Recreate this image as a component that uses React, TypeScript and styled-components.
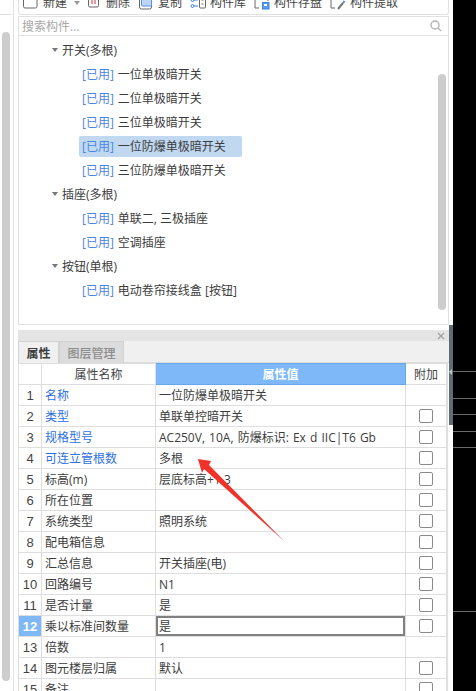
import React from 'react'
import styled, {createGlobalStyle} from 'styled-components'

const Global = createGlobalStyle`
  html, body {
    margin: 0;
    padding: 0;
    background: #fff;
  }
  * {
    box-sizing: border-box;
  }
`

const Page = styled.div`
  position: relative;
  display: flex;
  width: 476px;
  height: 691px;
  overflow: hidden;
  background: #fff;
  font-family: "Open Sans", "Noto Sans CJK SC", sans-serif;
  font-size: 12px;
  color: #3c3c3c;
`

const LeftRail = styled.div`
  width: 18px;
  flex: none;
`

const LeftInner = styled.div`
  width: 14px;
  height: 100%;
  border-right: 1px solid #e2e2e2;
`

const LeftStub = styled.div`
  height: 15px;
  border-bottom: 1px solid #e2e2e2;
  border-bottom-right-radius: 3px;
`

const LeftThumb = styled.div`
  width: 8px;
  height: 649px;
  margin: 17px 0 0 2px;
  border-radius: 4px;
  background: #cdcdcd;
`

const Main = styled.div`
  width: 431px;
  flex: none;
  display: flex;
  flex-direction: column;

  > * {
    flex: none;
  }
`

const Toolbar = styled.div`
  height: 15px;
  display: flex;
  align-items: flex-end;
  overflow: hidden;
  padding: 0 0 2px 4px;
  border: 1px solid #e2e2e2;
  border-top: none;
  border-radius: 0 0 3px 3px;
`

const ToolButton = styled.div<{$w: number}>`
  width: ${p => p.$w}px;
  flex: none;
  display: flex;
  align-items: center;
  gap: 4px;
  line-height: 18px;
  white-space: nowrap;
  color: #444;
`

const Caret = styled.span`
  width: 0;
  height: 0;
  margin-left: 3px;
  border-left: 3px solid transparent;
  border-right: 3px solid transparent;
  border-top: 4px solid #999;
`

const SearchBox = styled.div`
  height: 20px;
  margin-top: 1px;
  display: flex;
  align-items: center;
  justify-content: space-between;
  padding: 0 6px 0 3px;
  border: 1px solid #e2e2e2;
  color: #a8a8a8;
`

const TreePanel = styled.div`
  position: relative;
  height: 289px;
  padding-top: 2px;
  border: 1px solid #e2e2e2;
  border-top: none;
`

const GroupRow = styled.div`
  height: 24px;
  display: flex;
  align-items: center;
  padding: 0 0 1px 33px;
  gap: 4px;
`

const GroupArrow = styled.span`
  width: 0;
  height: 0;
  border-left: 3.5px solid transparent;
  border-right: 3.5px solid transparent;
  border-top: 4px solid #777;
`

const ItemRow = styled.div`
  height: 24px;
  display: flex;
  align-items: center;
  padding-left: 60px;
`

const ItemLabel = styled.div<{$selected?: boolean}>`
  height: 21px;
  padding: 0 16px 0 3px;
  display: flex;
  align-items: center;
  gap: 4px;
  border-radius: 2px;
  background: ${p => (p.$selected ? '#c1d8f1' : 'transparent')};
`

const UsedTag = styled.span`
  color: #4a86e0;
`

const TreeThumb = styled.div`
  position: absolute;
  top: 38px;
  right: 2px;
  width: 8px;
  height: 236px;
  border-radius: 4px;
  background: #cdcdcd;
`

const PropsHeader = styled.div`
  height: 11px;
  margin-top: 5px;
  padding-right: 4px;
  display: flex;
  align-items: center;
  justify-content: flex-end;
  background: #e4e4e4;
`

const TabBar = styled.div`
  height: 22px;
  display: flex;
  background: #f0f0f0;
  border-bottom: 1px solid #dcdcdc;
`

const Tab = styled.div<{$active?: boolean}>`
  height: 22px;
  padding: 0 7.5px;
  display: flex;
  align-items: center;
  border: 1px solid #d2d2d2;
  border-bottom: none;
  font-weight: ${p => (p.$active ? 700 : 500)};
  color: ${p => (p.$active ? '#3c3c3c' : '#8c8c8c')};
  background: ${p => (p.$active ? '#f0f0f0' : '#dcdcdc')};
`

const TableArea = styled.div`
  width: 430px;
  height: 400px;
  border-right: 1px solid #e0e0e0;
`

const Table = styled.table`
  width: 428px;
  table-layout: fixed;
  border-collapse: collapse;
  font-size: 12px;
`

const Th = styled.th<{$value?: boolean}>`
  height: 21px;
  padding: 0;
  font-weight: ${p => (p.$value ? 700 : 400)};
  border: 1px solid ${p => (p.$value ? '#69a7ec' : '#dedede')};
  color: ${p => (p.$value ? '#fff' : '#444')};
  background: ${p => (p.$value ? '#7eb8f8' : '#fff')};
`

const Td = styled.td`
  height: 21px;
  padding: 1px 3px 0;
  border: 1px solid #dedede;
  line-height: 18px;
  white-space: nowrap;
  overflow: hidden;
`

const NumCell = styled(Td)<{$active?: boolean}>`
  padding: 1px 0 0;
  text-align: center;
  font-family: "Liberation Sans", sans-serif;
  font-size: 13px;
  font-weight: ${p => (p.$active ? 700 : 400)};
  color: ${p => (p.$active ? '#fff' : '#444')};
  background: ${p => (p.$active ? '#7eb8f8' : '#fff')};
`

const NameCell = styled(Td)<{$link?: boolean}>`
  color: ${p => (p.$link ? '#2f6fe4' : '#3c3c3c')};
`

const ValueCell = styled(Td)<{$editing?: boolean}>`
  word-spacing: 1px;
  box-shadow: ${p => (p.$editing ? 'inset 0 0 0 2px #808080' : 'none')};
`

const CheckCell = styled(Td)`
  padding: 0;
`

const Check = styled.div`
  width: 14px;
  height: 14px;
  margin: 0 auto;
  border: 1px solid #8a8a8a;
  border-radius: 2px;
  background: #fff;
`

const RightEdge = styled.div`
  width: 4px;
  flex: none;
  padding-top: 325px;
  background: #fff;
`

const EdgeBar = styled.div`
  position: relative;
  width: 4px;
  height: 100px;
  background: #5f6b75;

  &::after {
    content: "";
    position: absolute;
    top: 44px;
    left: 0;
    border-top: 3px solid transparent;
    border-bottom: 3px solid transparent;
    border-right: 3px solid #c4c9cd;
  }
`

const BlackRail = styled.div`
  flex: 1;
  background: #000;
`

const RailLine = styled.div<{$top: number}>`
  height: 1px;
  margin-top: ${p => p.$top}px;
  background: #6a6a6a;
`

const ArrowOverlay = styled.svg`
  position: absolute;
  top: 0;
  left: 0;
  pointer-events: none;
`

const groups = [
    {
        name: '开关(多根)',
        items: ['一位单极暗开关', '二位单极暗开关', '三位单极暗开关', '一位防爆单极暗开关', '三位防爆单极暗开关'],
    },
    {name: '插座(多根)', items: ['单联二, 三极插座', '空调插座']},
    {name: '按钮(单根)', items: ['电动卷帘接线盒 [按钮]']},
]

const rows = [
    {name: '名称', value: '一位防爆单极暗开关', link: true, check: false},
    {name: '类型', value: '单联单控暗开关', link: true, check: true},
    {name: '规格型号', value: 'AC250V, 10A, 防爆标识: Ex d IIC|T6 Gb', link: true, check: true},
    {name: '可连立管根数', value: '多根', link: true, check: true},
    {name: '标高(m)', value: '层底标高+1.3', check: true},
    {name: '所在位置', value: '', check: true},
    {name: '系统类型', value: '照明系统', check: true},
    {name: '配电箱信息', value: '', check: true},
    {name: '汇总信息', value: '开关插座(电)', check: true},
    {name: '回路编号', value: 'N1', check: true},
    {name: '是否计量', value: '是', check: true},
    {name: '乘以标准间数量', value: '是', check: true},
    {name: '倍数', value: '1', check: false},
    {name: '图元楼层归属', value: '默认', check: true},
    {name: '备注', value: '', check: true},
]

const railLines = [371, 26, 15, 16, 15, 163]

function ToolIcon({kind}: {kind: string}) {
    return (
        <svg width="16" height="14" viewBox="0 0 16 14" fill="none">
            {kind === 'new' && <rect x="0.5" y="-4" width="13.5" height="16" rx="1.5" stroke="#666"/>}
            {kind === 'delete' && (
                <g>
                    <rect x="2.5" y="-4" width="10" height="15" rx="1.5" stroke="#666"/>
                    <path d="M6 1v7M9 1v7" stroke="#d8333a"/>
                </g>
            )}
            {kind === 'copy' && (
                <g>
                    <rect x="1.5" y="-4" width="12" height="17" rx="2" stroke="#666"/>
                    <rect x="3.5" y="-4" width="10" height="14" rx="1" fill="#bcd6f6" stroke="#5b93dc"/>
                </g>
            )}
            {kind === 'library' && (
                <g>
                    <circle cx="2.5" cy="4" r="1.5" stroke="#3f86e0"/>
                    <circle cx="2.5" cy="10" r="1.5" stroke="#3f86e0"/>
                    <path d="M4 4h4M4 10h4" stroke="#3f86e0"/>
                    <rect x="9.5" y="-3" width="6" height="15" rx="1" stroke="#666"/>
                    <path d="M11.5 4h2M11.5 8h2" stroke="#666"/>
                </g>
            )}
            {kind === 'save' && (
                <g>
                    <path d="M5 12H1V-3H14V5" stroke="#666"/>
                    <rect x="8.5" y="6.5" width="6.5" height="6.5" fill="#5b9be6" stroke="#3f86e0"/>
                    <rect x="10" y="8" width="3" height="2" fill="#fff"/>
                </g>
            )}
            {kind === 'extract' && (
                <g>
                    <path d="M5 12H1V-3H14V3" stroke="#666"/>
                    <path d="M8 13l5-6" stroke="#777" strokeWidth="2"/>
                    <path d="M13 7l1.5-2" stroke="#4a86e0" strokeWidth="2"/>
                </g>
            )}
        </svg>
    )
}

function Tree() {
    return (
        <TreePanel>
            {groups.map(group => (
                <React.Fragment key={group.name}>
                    <GroupRow>
                        <GroupArrow/>
                        {group.name}
                    </GroupRow>
                    {group.items.map(item => (
                        <ItemRow key={item}>
                            <ItemLabel $selected={item === '一位防爆单极暗开关'}>
                                <UsedTag>[已用]</UsedTag>
                                {item}
                            </ItemLabel>
                        </ItemRow>
                    ))}
                </React.Fragment>
            ))}
            <TreeThumb/>
        </TreePanel>
    )
}

function Properties() {
    return (
        <TableArea>
            <Table>
                <colgroup>
                    <col width="23"/>
                    <col width="114"/>
                    <col width="250"/>
                    <col width="41"/>
                </colgroup>
                <thead>
                    <tr>
                        <Th/>
                        <Th>属性名称</Th>
                        <Th $value>属性值</Th>
                        <Th>附加</Th>
                    </tr>
                </thead>
                <tbody>
                    {rows.map((row, i) => (
                        <tr key={row.name}>
                            <NumCell $active={i === 11}>{i + 1}</NumCell>
                            <NameCell $link={row.link}>{row.name}</NameCell>
                            <ValueCell $editing={i === 11}>{row.value}</ValueCell>
                            <CheckCell>{row.check && <Check/>}</CheckCell>
                        </tr>
                    ))}
                </tbody>
            </Table>
        </TableArea>
    )
}

export default function App() {
    return (
        <Page>
            <Global/>
            <LeftRail>
                <LeftInner>
                    <LeftStub/>
                    <LeftThumb/>
                </LeftInner>
            </LeftRail>
            <Main>
                <Toolbar>
                    <ToolButton $w={63}><ToolIcon kind="new"/>新建<Caret/></ToolButton>
                    <ToolButton $w={52}><ToolIcon kind="delete"/>删除</ToolButton>
                    <ToolButton $w={52}><ToolIcon kind="copy"/>复制</ToolButton>
                    <ToolButton $w={64}><ToolIcon kind="library"/>构件库</ToolButton>
                    <ToolButton $w={76}><ToolIcon kind="save"/>构件存盘</ToolButton>
                    <ToolButton $w={70}><ToolIcon kind="extract"/>构件提取</ToolButton>
                </Toolbar>
                <SearchBox>
                    搜索构件...
                    <svg width="12" height="12" viewBox="0 0 12 12" fill="none">
                        <circle cx="5" cy="5" r="4" stroke="#b4b4b4" strokeWidth="1.4"/>
                        <path d="M8 8l3 3" stroke="#b4b4b4" strokeWidth="1.4"/>
                    </svg>
                </SearchBox>
                <Tree/>
                <PropsHeader>
                    <svg width="8" height="8" viewBox="0 0 8 8" fill="none">
                        <path d="M1 1l6 6M7 1l-6 6" stroke="#a0a0a0" strokeWidth="1.2"/>
                    </svg>
                </PropsHeader>
                <TabBar>
                    <Tab $active>属性</Tab>
                    <Tab>图层管理</Tab>
                </TabBar>
                <Properties/>
            </Main>
            <RightEdge>
                <EdgeBar/>
            </RightEdge>
            <BlackRail>
                {railLines.map((top, i) => <RailLine key={i} $top={top}/>)}
            </BlackRail>
            <ArrowOverlay width="476" height="691" viewBox="0 0 476 691">
                <polygon points="198,459 211,461 209,465 284,541 204,469 202,473" fill="#f0322a"/>
            </ArrowOverlay>
        </Page>
    )
}
